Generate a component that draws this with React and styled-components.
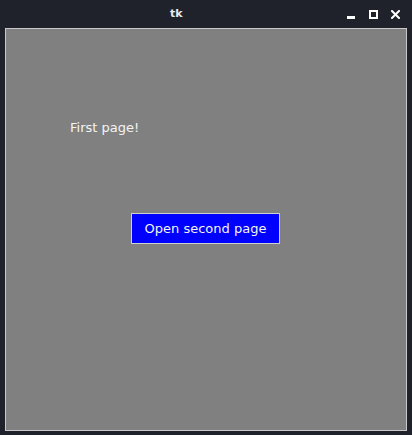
import React from "react";
import styled, { createGlobalStyle } from "styled-components";

const Global = createGlobalStyle`
  html, body { margin: 0; padding: 0; background: #1f222b; }
  body { width: 412px; height: 435px; overflow: hidden; }
`;

const Window = styled.div`
  width: 412px;
  height: 435px;
  background: #1f222b;
  border-radius: 6px 6px 0 0;
  display: flex;
  flex-direction: column;
  box-sizing: border-box;
  font-family: "DejaVu Sans", "Liberation Sans", sans-serif;
`;

const TitleBar = styled.div`
  height: 28px;
  flex: none;
  display: grid;
  grid-template-columns: 1fr auto 1fr;
  align-items: center;
`;

const Title = styled.div`
  grid-column: 2;
  color: #e6e9ef;
  font-size: 11px;
  font-weight: bold;
  margin-left: -36px;
  margin-top: -1px;
`;

const Controls = styled.div`
  grid-column: 3;
  justify-self: end;
  display: flex;
  align-items: center;
  gap: 13px;
  padding-right: 12px;
`;

const IconBox = styled.svg`
  display: block;
  width: 9px;
  height: 9px;
`;

const Content = styled.div`
  flex: 1;
  margin: 0 5px 4px 5px;
  border: 1px solid #c9c9c9;
  background: #808080;
  display: flex;
  flex-direction: column;
`;

const Label = styled.div`
  color: #f4f4f4;
  font-size: 13px;
  line-height: 16px;
  margin: 91px 0 0 64px;
`;

const Button = styled.button`
  align-self: flex-start;
  margin: 77px 0 0 125px;
  width: 149px;
  height: 31px;
  background: #0000ff;
  color: #f4f4f4;
  border: 1px solid #cfcfcf;
  font-family: "DejaVu Sans", "Liberation Sans", sans-serif;
  font-size: 13px;
  padding: 0;
  cursor: pointer;
`;

export default function App() {
  return (
    <>
      <Global />
      <Window>
        <TitleBar>
          <Title>tk</Title>
          <Controls>
            <IconBox viewBox="0 0 9 9">
              <rect x="0" y="6" width="8" height="3" fill="#ffffff" />
            </IconBox>
            <IconBox viewBox="0 0 9 9">
              <rect x="1" y="1" width="7" height="7" fill="none" stroke="#ffffff" strokeWidth="2" />
            </IconBox>
            <IconBox viewBox="0 0 9 9">
              <path d="M1 1 L8 8 M8 1 L1 8" stroke="#ffffff" strokeWidth="2" strokeLinecap="square" />
            </IconBox>
          </Controls>
        </TitleBar>
        <Content>
          <Label>First page!</Label>
          <Button>Open second page</Button>
        </Content>
      </Window>
    </>
  );
}
